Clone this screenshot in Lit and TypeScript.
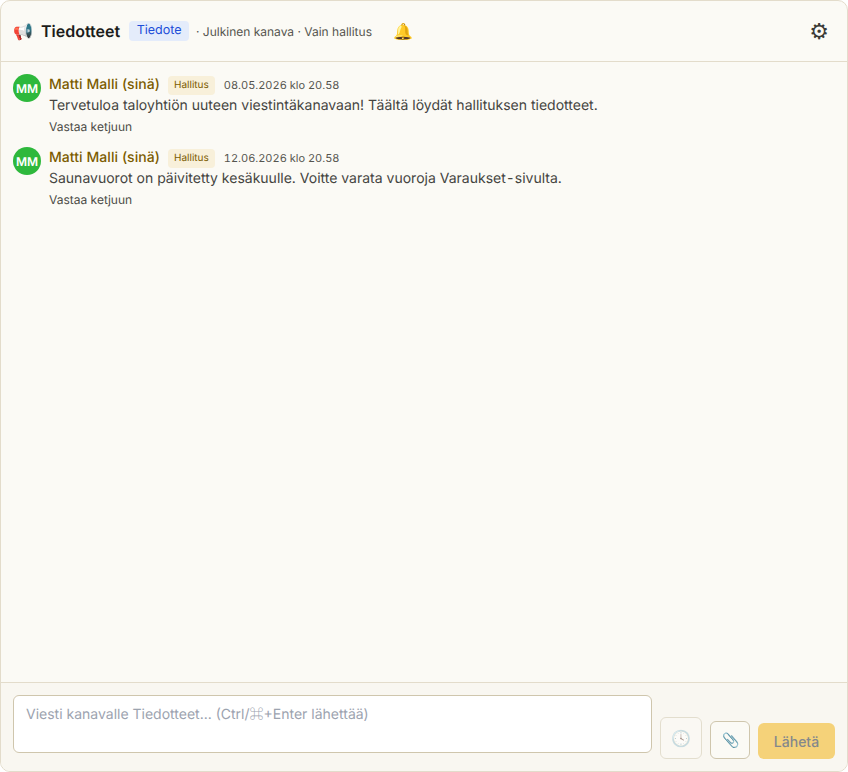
import { LitElement, html, css } from 'lit';
import { customElement, state } from 'lit/decorators.js';

const messages = [
  {
    date: '08.05.2026 klo 20.58',
    text: html`Tervetuloa taloyhtiön uuteen viestintäkanavaan! Täältä löydät hallituksen tiedotteet.`,
  },
  {
    date: '12.06.2026 klo 20.58',
    // the hyphen and the command sign come from a fallback font in the original
    text: html`Saunavuorot on päivitetty kesäkuulle. Voitte varata vuoroja Varaukset<span class="nbh">\u2011</span>sivulta.`,
  },
];

@customElement('app-root')
export class AppRoot extends LitElement {
  @state() draft = '';

  static styles = css`
    :host {
      display: block;
      width: 848px;
      height: 772px;
      font-family: Inter, 'Noto Sans', sans-serif;
      color: #44443f;
      text-rendering: geometricPrecision;
    }
    * {
      box-sizing: border-box;
    }
    .fb {
      font-family: 'Noto Sans CJK JP', sans-serif;
    }
    .nbh {
      margin: 0 2px;
    }
    .panel {
      display: flex;
      flex-direction: column;
      height: 100%;
      background: #fbfaf5;
      border: 1px solid #e3dccb;
      border-radius: 10px;
      overflow: hidden;
    }
    .header {
      display: flex;
      align-items: center;
      height: 61px;
      padding: 0 12px;
      border-bottom: 1px solid #e3dccb;
      flex: none;
    }
    .megaphone {
      font-size: 16px;
      width: 20px;
      margin-right: 8px;
    }
    .title {
      font-size: 16px;
      font-weight: 600;
      color: #1c1c1a;
      margin-right: 9px;
    }
    .type {
      font-size: 12.5px;
      line-height: 20px;
      padding: 0 7.5px;
      border-radius: 4px;
      background: #e4ecfb;
      color: #1d4ed8;
      margin-right: 7px;
    }
    .meta {
      font-size: 12px;
      color: #55554f;
    }
    .bell {
      font-size: 16px;
      margin-left: 21px;
    }
    .gear {
      margin-left: auto;
      margin-right: 6px;
      margin-top: 4px;
      font-family: 'DejaVu Sans', sans-serif;
      font-size: 22px;
      line-height: 24px;
      color: #3a3a36;
    }
    .list {
      flex: 1;
      padding: 12px 12px 0;
      display: flex;
      flex-direction: column;
      gap: 13px;
    }
    .msg {
      display: flex;
      gap: 8px;
    }
    .avatar {
      width: 28px;
      height: 28px;
      border-radius: 50%;
      background: #2eb83c;
      color: #fff;
      font-size: 12px;
      font-weight: 600;
      display: flex;
      align-items: center;
      justify-content: center;
      flex: none;
    }
    .top {
      display: flex;
      align-items: center;
      height: 21px;
    }
    .name {
      font-size: 14px;
      font-weight: 500;
      letter-spacing: 0.06px;
      color: #7c5c00;
      margin-right: 8px;
    }
    .role {
      font-size: 10px;
      line-height: 19px;
      padding: 0 6px;
      margin-top: 2px;
      border-radius: 4px;
      background: #f8f0da;
      color: #7c5c00;
      margin-right: 9px;
    }
    .date {
      font-size: 11px;
      font-variant-numeric: tabular-nums;
      color: #55554f;
    }
    .text {
      font-size: 14px;
      line-height: 21px;
    }
    .reply {
      font-size: 12px;
      line-height: 14px;
      margin-top: 4px;
      color: #4b4b46;
    }
    .composer {
      flex: none;
      height: 89px;
      border-top: 1px solid #e3dccb;
      background: #f9f7f1;
      padding: 12px;
      display: flex;
      align-items: flex-end;
    }
    .field {
      position: relative;
      width: 639px;
      height: 58px;
      margin-bottom: 6px;
    }
    textarea {
      display: block;
      width: 100%;
      height: 100%;
      padding: 8px 12px;
      border: 1px solid #cfc6ad;
      border-radius: 6px;
      background: #fff;
      font: 14px/20px Inter, 'Noto Sans', sans-serif;
      color: #44443f;
      resize: none;
      outline: none;
    }
    .hint {
      position: absolute;
      left: 13px;
      top: 9px;
      font-size: 14px;
      line-height: 20px;
      color: #9ca3af;
      pointer-events: none;
    }
    .btn {
      display: flex;
      align-items: center;
      justify-content: center;
      font-size: 14px;
      border-radius: 6px;
      background: #fbfaf5;
      padding: 0;
    }
    .clock {
      width: 42px;
      height: 42px;
      margin-left: 8px;
      border: 1px solid #cfc6ad;
      opacity: 0.5;
      font-size: 16px;
    }
    .clip {
      width: 40px;
      height: 38px;
      margin-left: 8px;
      border: 1px solid #cfc6ad;
    }
    .send {
      width: 77px;
      height: 36px;
      margin-left: 8px;
      border: none;
      background: #f5d279;
      color: #84888c;
      font: 500 14px Inter, 'Noto Sans', sans-serif;
    }
  `;

  render() {
    return html`
      <div class="panel">
        <div class="header">
          <span class="megaphone">📢</span>
          <span class="title">Tiedotteet</span>
          <span class="type">Tiedote</span>
          <span class="meta">· Julkinen kanava · Vain hallitus</span>
          <span class="bell">🔔</span>
          <span class="gear">⚙</span>
        </div>
        <div class="list">
          ${messages.map(
            (m) => html`
              <div class="msg">
                <div class="avatar">MM</div>
                <div>
                  <div class="top">
                    <span class="name">Matti Malli (sinä)</span>
                    <span class="role">Hallitus</span>
                    <span class="date">${m.date}</span>
                  </div>
                  <div class="text">${m.text}</div>
                  <div class="reply">Vastaa ketjuun</div>
                </div>
              </div>
            `
          )}
        </div>
        <div class="composer">
          <div class="field">
            <textarea
              .value=${this.draft}
              @input=${(e: Event) => (this.draft = (e.target as HTMLTextAreaElement).value)}
            ></textarea>
            ${this.draft
              ? ''
              : html`<span class="hint">Viesti kanavalle Tiedotteet... (Ctrl/<span class="fb">⌘</span>+Enter lähettää)</span>`}
          </div>
          <button class="btn clock">🕓</button>
          <button class="btn clip">📎</button>
          <button class="btn send">Lähetä</button>
        </div>
      </div>
    `;
  }
}
